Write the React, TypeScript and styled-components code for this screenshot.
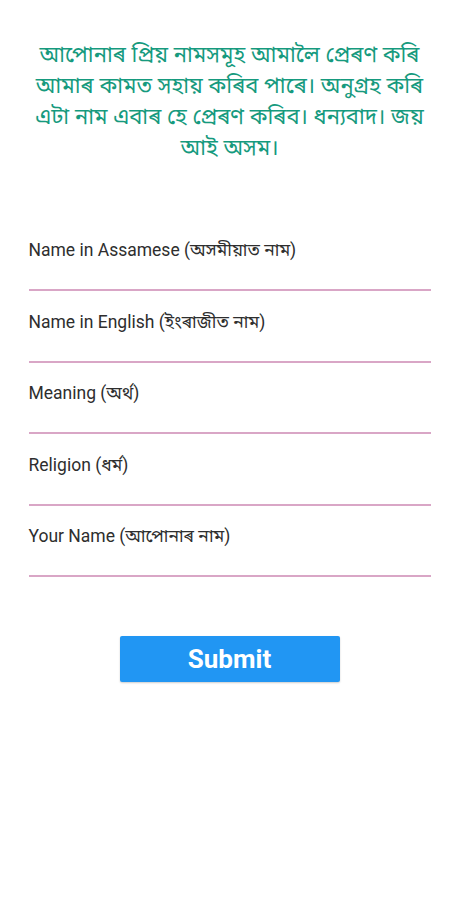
import React from "react";
import styled, { createGlobalStyle } from "styled-components";

const GlobalStyle = createGlobalStyle`
  html, body {
    margin: 0;
    padding: 0;
    background: #fff;
  }
  body {
    font-family: Roboto, "Noto Sans", sans-serif;
  }
`;

const Page = styled.div`
  width: 459px;
  min-height: 900px;
  background: #fff;
  display: flex;
  flex-direction: column;
  align-items: center;
  padding-top: 41px;
  box-sizing: border-box;
`;

const Intro = styled.p`
  margin: 0;
  width: 392px;
  color: #169a7e;
  font-size: 22px;
  line-height: 31px;
  text-align: center;
  font-family: "Noto Sans Bengali", "Noto Sans", sans-serif;
`;

const Form = styled.form`
  width: 402px;
  margin-top: 54px;
  display: flex;
  flex-direction: column;
`;

const Field = styled.label`
  display: block;
  height: 72px;
  box-sizing: border-box;
  padding-top: 21px;
  border-bottom: 2px solid #d9a6c6;
  font-size: 17.5px;
  color: #2e2e2e;
  font-family: Roboto, "Noto Sans Bengali", sans-serif;
  margin-top: -0.5px;
  &:first-child {
    margin-top: 0;
  }
`;

const Submit = styled.button`
  margin-top: 59px;
  width: 220px;
  height: 46px;
  border: none;
  border-radius: 2px;
  background: #2196f3;
  color: #fff;
  font-family: Roboto, Arial, sans-serif;
  font-weight: bold;
  font-size: 26px;
  box-shadow: 0 1px 2px rgba(0, 0, 0, 0.2);
`;

const fields = [
  "Name in Assamese (অসমীয়াত নাম)",
  "Name in English (ইংৰাজীত নাম)",
  "Meaning (অৰ্থ)",
  "Religion (ধৰ্ম)",
  "Your Name (আপোনাৰ নাম)",
];

export default function App() {
  return (
    <Page>
      <GlobalStyle />
      <Intro>
        আপোনাৰ প্ৰিয় নামসমূহ আমালৈ প্ৰেৰণ কৰি আমাৰ কামত সহায় কৰিব পাৰে। অনুগ্ৰহ কৰি
        এটা নাম এবাৰ হে প্ৰেৰণ কৰিব। ধন্যবাদ। জয় আই অসম।
      </Intro>
      <Form onSubmit={(e) => e.preventDefault()}>
        {fields.map((f) => (
          <Field key={f}>{f}</Field>
        ))}
      </Form>
      <Submit type="button">Submit</Submit>
    </Page>
  );
}
